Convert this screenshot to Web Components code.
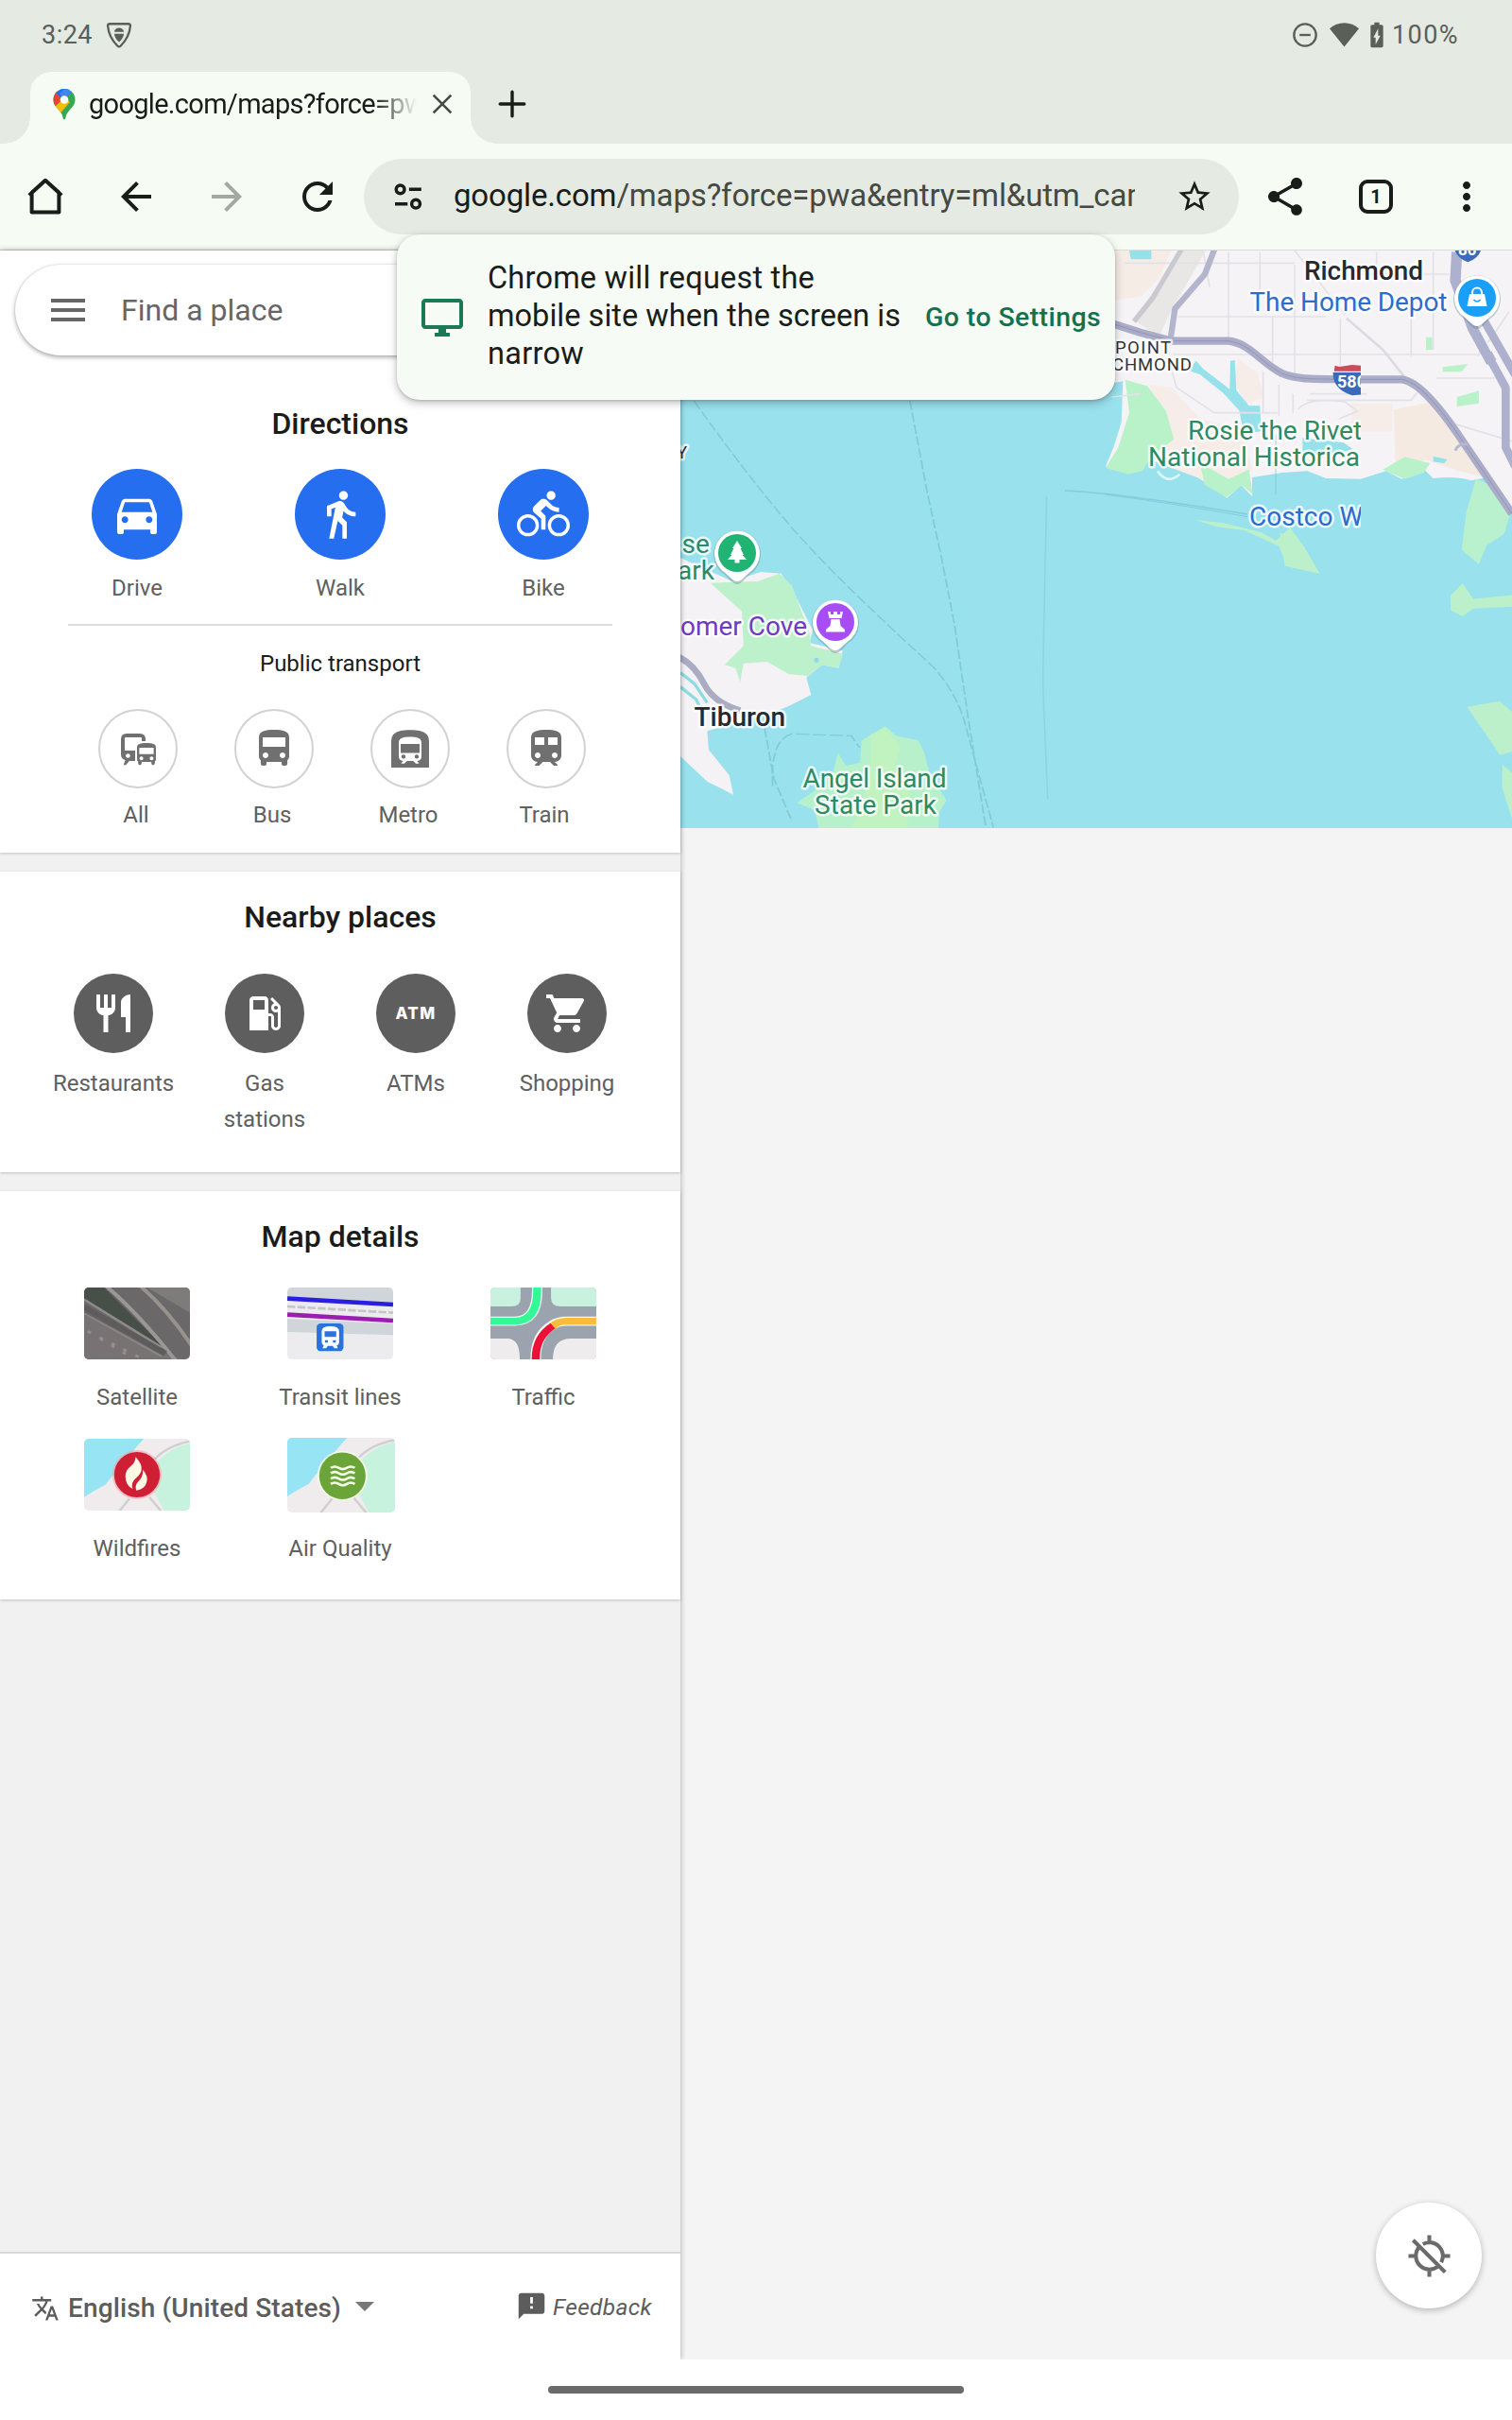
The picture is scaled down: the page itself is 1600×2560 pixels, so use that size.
<!DOCTYPE html>
<html lang="en">
<head>
<meta charset="utf-8">
<title>Google Maps</title>
<style>
html,body{margin:0;padding:0}
body{width:1600px;height:2560px;overflow:hidden;background:#fff;font-family:Roboto,"Liberation Sans",sans-serif}
</style>
</head>
<body>
<maps-screen></maps-screen>
<script>
const ICONS = {
  menu: '<path d="M3 18h18v-2H3v2zm0-5h18v-2H3v2zm0-7v2h18V6H3z"/>',
  home: '<path d="M12 3.400 4.800 9.900V20.300h14.400V9.900z M3.400 11.300 12 3.400l8.600 7.900" fill="none" stroke="currentColor" stroke-width="2" stroke-linejoin="round"/>',
  back: '<path d="M20 11H7.830l5.590-5.590L12 4l-8 8 8 8 1.410-1.410L7.830 13H20v-2z"/>',
  forward: '<path d="M12 4l-1.410 1.410L16.170 11H4v2h12.170l-5.580 5.590L12 20l8-8z"/>',
  reload: '<path d="M17.650 6.350C16.200 4.900 14.210 4 12 4c-4.420 0-7.990 3.580-7.990 8s3.570 8 7.990 8c3.730 0 6.840-2.550 7.730-6h-2.080c-.82 2.330-3.040 4-5.650 4-3.310 0-6-2.690-6-6s2.690-6 6-6c1.660 0 3.140.69 4.220 1.780L13 11h7V4l-2.350 2.350z"/>',
  tune: '<g fill="none" stroke="currentColor" stroke-width="2"><circle cx="7.200" cy="7.600" r="2.500"/><circle cx="16.600" cy="16.400" r="2.500"/><path d="M12.500 7.600h7.400M4 16.400h7.600"/></g>',
  star: '<path d="M22 9.240l-7.190-.62L12 2 9.190 8.630 2 9.240l5.460 4.730L5.820 21 12 17.270 18.180 21l-1.630-7.030L22 9.240zM12 15.400l-3.760 2.270 1-4.280-3.320-2.880 4.380-.38L12 6.100l1.710 4.040 4.380.38-3.320 2.880 1 4.280L12 15.400z"/>',
  share: '<path d="M18 16.080c-.76 0-1.440.3-1.960.77L8.910 12.700c.05-.23.09-.46.09-.7s-.04-.47-.09-.7l7.050-4.110c.54.5 1.250.81 2.040.81 1.660 0 3-1.340 3-3s-1.340-3-3-3-3 1.340-3 3c0 .24.04.47.09.7L8.040 9.810C7.500 9.310 6.790 9 6 9c-1.660 0-3 1.340-3 3s1.340 3 3 3c.79 0 1.500-.31 2.040-.81l7.120 4.160c-.05.21-.08.43-.08.65 0 1.610 1.310 2.920 2.920 2.920s2.920-1.310 2.920-2.920-1.310-2.920-2.920-2.920z"/>',
  dots: '<path d="M12 8c1.100 0 2-.9 2-2s-.9-2-2-2-2 .9-2 2 .9 2 2 2zm0 2c-1.100 0-2 .9-2 2s.9 2 2 2 2-.9 2-2-.9-2-2-2zm0 6c-1.100 0-2 .9-2 2s.9 2 2 2 2-.9 2-2-.9-2-2-2z"/>',
  close: '<path d="M4 4l16 16M20 4L4 20" fill="none" stroke="currentColor" stroke-width="2.200"/>',
  plus: '<path d="M12 3v18M3 12h18" fill="none" stroke="currentColor" stroke-width="2.400" stroke-linecap="round"/>',
  monitor: '<path d="M21 2H3c-1.100 0-2 .9-2 2v12c0 1.100.9 2 2 2h7v2H8v2h8v-2h-2v-2h7c1.100 0 2-.9 2-2V4c0-1.100-.9-2-2-2zm0 14H3V4h18v12z"/>',
  debug: '<path d="M4.200 2.600h15.600q2 0 1.700 2c-.6 6.400-3.500 12-8.100 16.600q-1.400 1.300-2.800 0C6 16.600 3.100 11 2.500 4.600q-.3-2 1.700-2z" fill="none" stroke="currentColor" stroke-width="1.900"/><path d="M8 9.300a4 3.300 0 0 1 8 0z M8 10.900h8c0 2.700-1.900 5.200-4 7-2.100-1.800-4-4.300-4-7z"/>',
  dnd: '<circle cx="12" cy="12" r="10" fill="none" stroke="currentColor" stroke-width="2"/><path d="M7 11h10v2H7z"/>',
  wifi: '<path d="M0 7.200C3.200 4.100 7.400 2.500 12 2.500s8.800 1.600 12 4.700L12 22z"/>',
  battery: '<path d="M15.700 4H14V2h-4v2H8.300C7.600 4 7 4.600 7 5.300v15.300c0 .8.6 1.400 1.300 1.400h7.300c.8 0 1.400-.6 1.400-1.300V5.300C17 4.600 16.400 4 15.700 4zM11 19.500V14H9.200l3.800-7v5.500h1.800z"/>',
  car: '<path d="M18.920 6.010C18.720 5.420 18.160 5 17.500 5h-11c-.66 0-1.210.42-1.420 1.010L3 12v8c0 .55.45 1 1 1h1c.55 0 1-.45 1-1v-1h12v1c0 .55.45 1 1 1h1c.55 0 1-.45 1-1v-8l-2.080-5.990zM6.500 16c-.83 0-1.500-.67-1.500-1.500S5.670 13 6.500 13s1.500.67 1.500 1.500S7.330 16 6.500 16zm11 0c-.83 0-1.500-.67-1.500-1.500s.67-1.500 1.500-1.500 1.500.67 1.500 1.500-.67 1.500-1.500 1.500zM5 11l1.500-4.500h11L19 11H5z"/>',
  walk: '<path d="M13.500 5.500c1.100 0 2-.9 2-2s-.9-2-2-2-2 .9-2 2 .9 2 2 2zM9.800 8.900L7 23h2.100l1.800-8 2.100 2v6h2v-7.500l-2.100-2 .6-3C14.800 12 16.800 13 19 13v-2c-1.900 0-3.500-1-4.300-2.400l-1-1.600c-.4-.6-1-1-1.700-1-.3 0-.5.1-.8.1L6 8.300V13h2V9.600l1.800-.7"/>',
  bike: '<path d="M15.500 5.500c1.100 0 2-.9 2-2s-.9-2-2-2-2 .9-2 2 .9 2 2 2zM5 12c-2.800 0-5 2.200-5 5s2.200 5 5 5 5-2.200 5-5-2.200-5-5-5zm0 8.500c-1.900 0-3.500-1.600-3.500-3.500s1.600-3.500 3.500-3.500 3.500 1.600 3.500 3.500-1.600 3.500-3.500 3.500zm5.800-10l2.400-2.400.8.8c1.300 1.300 3 2.100 5.100 2.100V9c-1.500 0-2.700-.6-3.600-1.500l-1.900-1.900c-.5-.4-1-.6-1.600-.6s-1.100.2-1.400.6L7.800 8.400c-.4.4-.6.9-.6 1.400 0 .6.2 1.100.6 1.400L11 14v5h2v-6.200l-2.200-2.300zM19 12c-2.800 0-5 2.200-5 5s2.200 5 5 5 5-2.200 5-5-2.200-5-5-5zm0 8.500c-1.900 0-3.500-1.600-3.500-3.500s1.600-3.500 3.500-3.500 3.500 1.600 3.500 3.500-1.600 3.500-3.500 3.500z"/>',
  all: '<path fill-rule="evenodd" d="M6 4h7q3 0 3 3v1h-2V6.400q0-.4-.5-.4H5.500q-.5 0-.5.5V13h5.500v5.500H7.400L5.600 20.600H4.400L5.300 18Q3 17.500 3 15V7q0-3 3-3zm.7 10.600a1.150 1.150 0 1 0 .01 0z"/><path fill-rule="evenodd" d="M16.500 9c3 0 5 .4 5 2.400v6.200q0 .8-.6 1.300v.9q0 .9-.9.9t-.9-.9V19h-5.200v.8q0 .9-.9.9t-.9-.9v-.9q-.6-.5-.6-1.300v-6.200c0-2 2-2.400 5-2.400zM12.700 11.500v3.400h7.600v-3.400zM13.800 16.100a1 1 0 1 0 .01 0zm5.400 0a1 1 0 1 0 .01 0z"/>',
  bus: '<path d="M4 16c0 .88.390 1.670 1 2.220V20c0 .55.45 1 1 1h1c.55 0 1-.45 1-1v-1h8v1c0 .55.45 1 1 1h1c.55 0 1-.45 1-1v-1.780c.61-.55 1-1.340 1-2.220V6c0-3.500-3.580-4-8-4s-8 .5-8 4v10zm3.500 1c-.83 0-1.500-.67-1.500-1.500S6.670 14 7.500 14s1.500.67 1.500 1.500S8.330 17 7.500 17zm9 0c-.83 0-1.500-.67-1.500-1.500s.67-1.500 1.500-1.500 1.500.67 1.500 1.500-.67 1.500-1.500 1.500zm1.500-6H6V6h12v5z"/>',
  metro: '<path fill-rule="evenodd" d="M7 2.500C9 2 15 2 17 2.500q5 1 5 5.500v14H2V8q0-4.500 5-5.500zM12 5.800c-3.500 0-6 .5-6 3.200v7q0 2.300 2.300 2.500L7.200 19.900h1.700L10.400 18.500h3.200l1.500 1.400h1.700l-1.100-1.400Q18 18.300 18 16V9c0-2.700-2.500-3.200-6-3.200zM7 9.500h10v4.800H7zM8.500 15.100a1.100 1.100 0 1 1-.01 0zm7 0a1.100 1.100 0 1 1-.01 0z"/>',
  train: '<path d="M12 2c-4 0-8 .5-8 4v9.500C4 17.430 5.570 19 7.500 19L6 20.500v.5h2.230l2-2H14l2 2h2v-.5L16.500 19c1.930 0 3.500-1.570 3.500-3.500V6c0-3.500-3.580-4-8-4zM7.500 17c-.83 0-1.500-.67-1.500-1.500S6.670 14 7.500 14s1.500.67 1.500 1.500S8.330 17 7.500 17zm3.500-7H6V6h5v4zm2 0V6h5v4h-5zm3.500 7c-.83 0-1.500-.67-1.500-1.500s.67-1.500 1.500-1.500 1.500.67 1.500 1.500-.67 1.500-1.500 1.500z"/>',
  food: '<path d="M11 9H9V2H7v7H5V2H3v7c0 2.120 1.660 3.840 3.750 3.970V22h2.500v-9.030C11.340 12.840 13 11.120 13 9V2h-2v7zm5-3v8h2.500v8H21V2c-2.760 0-5 2.240-5 4z"/>',
  gas: '<path d="M19.770 7.230l.01-.01-3.720-3.720L15 4.560l2.110 2.110c-.94.36-1.610 1.260-1.610 2.330 0 1.380 1.120 2.500 2.500 2.500.36 0 .69-.08 1-.21v7.210c0 .55-.45 1-1 1s-1-.45-1-1V14c0-1.100-.9-2-2-2h-1V5c0-1.100-.9-2-2-2H6c-1.100 0-2 .9-2 2v16h10v-7.500h1.500v5c0 1.380 1.120 2.500 2.500 2.500s2.500-1.120 2.500-2.500V9c0-.69-.28-1.320-.73-1.770zM12 10H6V5h6v5zm6 0c-.55 0-1-.45-1-1s.45-1 1-1 1 .45 1 1-.45 1-1 1z"/>',
  cart: '<path d="M7 18c-1.100 0-1.990.9-1.990 2S5.900 22 7 22s2-.9 2-2-.9-2-2-2zM1 2v2h2l3.600 7.590-1.350 2.450c-.16.28-.25.61-.25.96 0 1.100.9 2 2 2h12v-2H7.420c-.14 0-.25-.11-.25-.25l.03-.12.9-1.630h7.450c.75 0 1.410-.41 1.750-1.030l3.580-6.490c.08-.14.12-.31.12-.48 0-.55-.45-1-1-1H5.210l-.94-2H1zm16 16c-1.100 0-1.990.9-1.990 2s.89 2 1.990 2 2-.9 2-2-.9-2-2-2z"/>',
  translate: '<path d="M12.870 15.070l-2.540-2.510.03-.03c1.740-1.940 2.980-4.170 3.710-6.530H17V4h-7V2H8v2H1v1.990h11.170C11.500 7.920 10.440 9.750 9 11.350 8.070 10.320 7.300 9.190 6.690 8h-2c.73 1.630 1.730 3.170 2.980 4.560l-5.090 5.020L4 19l5-5 3.110 3.110.76-2.040zM18.500 10h-2L12 22h2l1.120-3h4.750L21 22h2l-4.500-12zm-2.620 7l1.620-4.330L19.120 17h-3.240z"/>',
  feedback: '<path d="M20 2H4c-1.100 0-1.990.9-1.990 2L2 22l4-4h14c1.100 0 2-.9 2-2V4c0-1.100-.9-2-2-2zm-7 12h-2v-2h2v2zm0-4h-2V5h2v5z"/>',
  nolocation: '<g fill="none" stroke="currentColor" stroke-width="2"><path d="M8.700 5.840A7 7 0 0 1 18.200 15.300M17 16.900A7 7 0 0 1 7.100 7M12 1.200V5M12 19v3.800M1.200 12H5M19 12h3.800M3.600 3.800 20.200 20.400"/></g>'
};

function define(name, css, html, setup) {
  const t = document.createElement('template');
  customElements.define(name, class extends HTMLElement {
    constructor() { super(); this.attachShadow({mode: 'open'}); }
    connectedCallback() {
      t.innerHTML = '<style>*{box-sizing:border-box}' + css + '</style>' + (typeof html === 'function' ? html(this) : html);
      this.shadowRoot.replaceChildren(t.content.cloneNode(true));
      if (setup) setup(this);
    }
  });
}

define('g-icon', ':host{display:block;flex:none}svg{display:block;fill:currentColor}',
  el => `<svg width="${el.getAttribute('size')}" height="${el.getAttribute('size')}" viewBox="0 0 24 24">${ICONS[el.getAttribute('name')]}</svg>`);

/* One line of text whose tracking is adjusted so that it spans the given width. */
define('fit-text', ':host{display:block;white-space:nowrap;flex:none}span{display:inline-block}', '<span><slot></slot></span>', el => {
  const s = el.shadowRoot.querySelector('span'), w = +el.getAttribute('w');
  s.style.letterSpacing = ((w - s.getBoundingClientRect().width) / el.textContent.length) + 'px';
});

define('status-bar',
  `:host{display:flex;height:76px;align-items:center;padding:0 56px 3px 44px;color:#5a5f59;font-size:27px;background:#e5eae3}
   .r{margin-left:auto;display:flex;align-items:center} `,
  `<fit-text w="54">3:24</fit-text><g-icon name="debug" size="30" style="margin-left:13px"></g-icon>
   <div class="r"><g-icon name="dnd" size="28" style="margin-right:12px"></g-icon><g-icon name="wifi" size="31" style="margin-right:3px"></g-icon><g-icon name="battery" size="32"></g-icon><fit-text w="71">100%</fit-text></div>`);

define('tab-strip',
  `:host{display:flex;height:76px;background:#e5eae3;color:#191d19}
   .tab{position:relative;display:flex;align-items:center;margin-left:32px;width:466px;height:76px;padding:0 16px 8px 24px;background:#f6fcf4;border-radius:22px 22px 0 0}
   .tab:before,.tab:after{content:"";position:absolute;bottom:0;width:28px;height:28px}
   .tab:before{left:-28px;background:radial-gradient(circle at 0 0,#0000 27.500px,#f6fcf4 28px)}
   .tab:after{right:-28px;background:radial-gradient(circle at 100% 0,#0000 27.500px,#f6fcf4 28px)}
   .pin{flex:none;margin-right:14px}
   .t{width:347px;flex:none;overflow:hidden;font-size:29px;line-height:40px;-webkit-mask:linear-gradient(90deg,#000 87%,#0000 100%);mask:linear-gradient(90deg,#000 87%,#0000 100%)}
   .x{color:#454944;margin-left:13px}`,
  `<div class="tab"><svg class="pin" width="24" height="33" viewBox="0 0 24 33"><defs><clipPath id="p"><path d="M12 0a11.500 11.500 0 0 1 11.500 11.500c0 7-5.500 9-9 15.500-1 2-1 5.500-2.500 5.500s-1.500-3.500-2.500-5.500c-3.500-6.500-9-8.500-9-15.500A11.500 11.500 0 0 1 12 0z"/></clipPath></defs><g clip-path="url(#p)"><path fill="#34a853" d="M0 0h24v33H0z"/><path fill="#fbbc04" d="M-2 24 12 8l6 6L5 29z"/><path fill="#ea4335" d="M0 20V2l4-1 8 9z"/><path fill="#1a73e8" d="M3 4l5 5 4 2L22 1 12-2z"/><path fill="#4285f4" d="M12 12 22 0l-8-2-7 7z"/></g><circle cx="12" cy="11.500" r="4.300" fill="#fff"/></svg>
   <div class="t"><fit-text w="370">google.com/maps?force=pwa</fit-text></div><g-icon class="x" name="close" size="28"></g-icon></div><g-icon name="plus" size="34" style="margin:17px 0 0 27px"></g-icon>`);

define('tool-bar',
  `:host{display:flex;height:112px;align-items:center;background:#f6fcf4;color:#191d19;padding-left:24px}
   .pill{display:flex;align-items:center;width:926px;height:80px;border-radius:40px;background:#e5eae3;margin-left:25px;padding-left:26px}
   .u{width:721px;overflow:hidden;font-size:33px;line-height:44px;color:#454944;margin:0 0 2px 27px}
   b{font-weight:400;color:#191d19}
   .n{width:36px;height:36px;border:4px solid #191d19;border-radius:9px;font-size:20px;font-weight:700;line-height:28px;text-align:center}`,
  `<g-icon name="home" size="48"></g-icon><g-icon name="back" size="48" style="margin-left:48px"></g-icon><g-icon name="forward" size="48" style="margin-left:48px;color:#a3a8a1"></g-icon><g-icon name="reload" size="48" style="margin-left:48px"></g-icon>
   <div class="pill"><g-icon name="tune" size="42"></g-icon><div class="u"><fit-text w="741"><b>google.com</b>/maps?force=pwa&amp;entry=ml&amp;utm_cam</fit-text></div><g-icon name="star" size="40" style="margin-left:43px"></g-icon></div>
   <g-icon name="share" size="48" style="margin-left:25px"></g-icon><div class="n" style="margin-left:54px">1</div><g-icon name="dots" size="48" style="margin-left:54px"></g-icon>`);

define('snack-bar',
  `:host{position:absolute;left:420px;top:248px;width:760px;height:175px;border-radius:24px;background:#f6fbf5;box-shadow:0 3px 10px #0004,0 1px 3px #0002;display:flex;align-items:center;z-index:5;color:#191d19;font-size:32.500px}
   .m{line-height:40px;margin:0 0 3px 24px;width:463px}
   .a{color:#15714d;font-weight:500;font-size:28.500px}`,
  `<g-icon name="monitor" size="48" style="color:#1b7a55;margin-left:24px"></g-icon><div class="m"><fit-text w="346">Chrome will request the</fit-text><fit-text w="437">mobile site when the screen is</fit-text><fit-text w="102">narrow</fit-text></div><fit-text class="a" w="186">Go to Settings</fit-text>`);

define('search-box',
  `:host{display:flex;align-items:center;height:96px;margin:15px 16px 0;padding:0 32px;border-radius:48px;background:#fff;box-shadow:0 2px 5px #0005,0 0 2px #0002;color:#666;font-size:32px}`,
  `<g-icon name="menu" size="48"></g-icon><span style="margin-left:32px"><slot></slot></span>`);

define('round-item',
  `:host{display:flex;flex-direction:column;align-items:center;flex:none;width:var(--col);font-size:24px;line-height:38px;color:#606060;text-align:center}
   .c{width:var(--d);height:var(--d);border-radius:50%;background:var(--bg);border:var(--bd,0);color:var(--fg);display:flex;align-items:center;justify-content:center;margin-bottom:var(--gap);position:relative;left:var(--shift,0)}
   .atm{font:800 17px Inter,Roboto,sans-serif}`,
  el => `<div class="c">${el.getAttribute('icon') === 'atm' ? '<fit-text class="atm" w="43">ATM</fit-text>' : `<g-icon name="${el.getAttribute('icon')}" size="${el.getAttribute('size') || 48}"></g-icon>`}</div><span><slot></slot></span>`);

define('panel-card',
  `:host{display:block;background:#fff;box-shadow:0 1px 3px #0003;flex:none}
   h2{margin:0;font-size:32px;font-weight:500;line-height:40px;text-align:center;color:#1b1b1b}`,
  el => `<slot name="top"></slot><h2>${el.getAttribute('heading')}</h2><slot></slot>`);

const coast = (x, y, extra) => `<path fill="#f0ecee" d="M${x} ${y}h300v240h-300z"/><path fill="#96e4f4" d="M${x} ${y}h165q-25 30-55 75Q${x+75} ${y+120} ${x+60} ${y+145} ${x+20} ${y+170} ${x} ${y+185}z"/><path fill="#c6f2de" d="M${x+300} ${y+12}Q${x+240} ${y+25} ${x+205} ${y+70} L${x+195} ${y+175} ${x+228} ${y+240} H${x+300}z" /><path fill="none" stroke="#cfcfd0" stroke-width="7" d="M${x+300} ${y+6}Q${x+230} ${y+20} ${x+195} ${y+65}M${x+180} ${y+185}L${x+220} ${y+240}M${x+125} ${y+190}L${x+90} ${y+240}"/>${extra}`;
const THUMBS = {
  satellite: ['76 66 292 228', '<path fill="#6b6869" d="M76 66h292v228H76z"/><path fill="#465049" d="M76 66h55l165 190L76 100z"/><path fill="#777374" d="M76 150 290 270l60 24H76z"/><path fill="#7d7c7b" d="M250 66h118v80z"/><path fill="none" stroke="#8f8b8a" stroke-width="7" d="M76 104 292 258"/><path fill="none" stroke="#9b9795" stroke-width="11" d="M135 60Q220 140 330 300"/><path fill="none" stroke="#98928e" stroke-width="11" d="M232 62Q310 140 375 255"/><path fill="none" stroke="#5e5b5d" stroke-width="18" d="M76 128 300 275"/><path fill="none" stroke="#8b8684" stroke-width="5" d="M76 148 290 285"/><path fill="none" stroke="#998f87" stroke-width="8" stroke-dasharray="10 28" d="M86 205 250 300M120 228 210 290"/>'],
  transit: ['638 66 292 228', '<path fill="#ececee" d="M638 66h292v228H638z"/><path fill="#d0d5d9" d="M638 66h292v60L638 96zM638 165l292 16v36l-292-10z"/><path fill="none" stroke="#c3c5c8" stroke-width="8" stroke-dasharray="22 6" d="M638 126 930 146"/><path fill="none" stroke="#2a1fe0" stroke-width="14" d="M638 101 930 120"/><path fill="none" stroke="#9a1fae" stroke-width="14" d="M638 152 930 171"/><rect x="719" y="180" width="74" height="88" rx="12" fill="#2b72dd"/><path fill="#fff" fill-rule="evenodd" d="M733 205q0-16 24-16t24 16v34q0 9-7 11l4 9h-10l-5-8h-13l-5 8h-10l4-9q-6-2-6-11zM741 205v18h32v-18zM742 233v8h8v-8zm22 0v8h8v-8z"/>'],
  traffic: ['1200 66 292 228', '<path fill="#9aa3ae" d="M1200 66h292v228h-292z"/><path fill="#c9f1df" d="M1200 66h83v35q0 25-25 25h-58zM1367 66h125v60h-98q-27 0-27-27z"/><path fill="#eeeced" d="M1200 228h47q34 0 34 66h-81zM1492 228h-70q-50 0-50 66h120z"/><g fill="none" stroke="#eefaf2" stroke-width="29"><path d="M1329 60v16q0 97-62 97h-70M1325 300Q1322 220 1370 186 1385 173 1410 173h85"/></g><path fill="none" stroke="#32f995" stroke-width="22" d="M1329 60v16q0 97-62 97h-70"/><path fill="none" stroke="#fbbc38" stroke-width="22" d="M1370 190q15-17 40-17h85"/><path fill="none" stroke="#ee1038" stroke-width="22" d="M1325 300Q1322 225 1372 188"/>'],
  fire: ['76 546 292 228', coast(76, 546, '<ellipse cx="222" cy="660" rx="68" ry="78" fill="#f3a3a8" opacity=".6"/><ellipse cx="222" cy="660" rx="63" ry="72" fill="#cf1f35"/><path fill="#fff9e6" d="M218 604q20 24 16 43-3 12-16 25-14 14-8 33-20-12-20-40 0-18 14-31 14-13 14-30zM238 644q17 22 10 42-5 19-28 24-5-14 5-28 14-14 13-38z"/>')],
  air: ['638 543 297 236', coast(638, 543, '<ellipse cx="790" cy="663" rx="69" ry="79" fill="#f1fbe8"/><ellipse cx="790" cy="663" rx="64" ry="74" fill="#6ba539"/><g fill="none" stroke="#f3ffe6" stroke-width="7.500">' + [638, 655, 672, 689].map(y => `<path d="M758 ${y}q11-8 22 0t22 0 22 0"/>`).join('') + '</g>')]
};
define('detail-item',
  `:host{display:flex;flex-direction:column;align-items:center;width:215px;font-size:24px;line-height:38px;color:#606060}
   svg{display:block;border-radius:5px;width:112px;height:76px;margin-bottom:21px}
   :host([art=air]) svg{width:114px;height:79px;margin:-1px -1px 19px 1px}`,
  el => { const [vb, art] = THUMBS[el.getAttribute('art')]; return `<svg viewBox="${vb}" preserveAspectRatio="none">${art}</svg><slot></slot>`; });

define('side-panel',
  `:host{display:flex;flex-direction:column;width:720px;flex:none;background:#f1f1f1;position:relative;z-index:2;box-shadow:0 0 6px #0005}
   .row{display:flex}
   .modes{padding:28px 0 0 37.500px;--col:215px;--d:96px;--bg:#256ef0;--fg:#fff;--gap:11px}
   hr{margin:19px 72px 21px;border:0;height:2px;background:#dcdcdc}
   .sub{font-size:24px;line-height:38px;text-align:center;color:#1b1b1b}
   .pt{padding:29px 0 0 72px;--col:144px;--d:84px;--bg:#fff;--bd:2px solid #d2d2d2;--fg:#707070;--gap:9px;--shift:2px}
   .near{padding:40px 0 0 40px;--col:160px;--d:84px;--bg:#5e5e5e;--fg:#fff;--gap:13px}
   .det{display:grid;grid-template-columns:repeat(3,215px);row-gap:25px;padding:34px 0 0 37.500px}
   footer{margin-top:auto;height:114px;border-top:2px solid #d9d9d9;background:#fff;display:flex;align-items:flex-start;padding:37px 30px 0 33px;color:#5c5c5c;line-height:40px}
   .lang{font-size:28px;font-weight:500;margin:1px 0 0 9px}
   .tri{border:10px solid #0000;border-top-color:#777;border-bottom:0;margin:14px 0 0 15px}
   .fb{font-size:24.500px;font-style:italic;margin-left:6px}`,
  `<panel-card heading="Directions" style="height:637px"><div slot="top" style="padding-bottom:52px"><search-box>Find a place</search-box></div>
     <div class="row modes"><round-item icon="car" size="56">Drive</round-item><round-item icon="walk" size="56">Walk</round-item><round-item icon="bike" size="56">Bike</round-item></div>
     <hr><div class="sub">Public transport</div>
     <div class="row pt"><round-item icon="all">All</round-item><round-item icon="bus">Bus</round-item><round-item icon="metro">Metro</round-item><round-item icon="train">Train</round-item></div>
   </panel-card>
   <panel-card heading="Nearby places" style="height:318px;margin-top:20px;padding-top:28px;box-sizing:border-box"><div class="row near"><round-item icon="food">Restaurants</round-item><round-item icon="gas">Gas<br>stations</round-item><round-item icon="atm">ATMs</round-item><round-item icon="cart">Shopping</round-item></div></panel-card>
   <panel-card heading="Map details" style="height:432px;margin-top:20px;padding-top:28px;box-sizing:border-box"><div class="det"><detail-item art="satellite">Satellite</detail-item><detail-item art="transit">Transit lines</detail-item><detail-item art="traffic">Traffic</detail-item><detail-item art="fire">Wildfires</detail-item><detail-item art="air">Air Quality</detail-item></div></panel-card>
   <footer><g-icon name="translate" size="30" style="margin-top:6px"></g-icon><fit-text class="lang" w="289">English (United States)</fit-text><i class="tri"></i><g-icon name="feedback" size="33" style="margin:2px 0 0 auto"></g-icon><fit-text class="fb" w="105">Feedback</fit-text></footer>`);

const pin = (x, y, color, glyph) => `<g transform="translate(${x} ${y})"><path d="M0 33C-5 33-8 27-14 22A25 25 0 1 1 14 22C8 27 5 33 0 33z" fill="#5a7a80" opacity=".35"/><path d="M0 30C-4 30-8 25-14 20A24 24 0 1 1 14 20C8 25 4 30 0 30z" fill="#fff"/><circle r="20" fill="${color}"/>${glyph}</g>`;
define('map-view',
  `:host{display:flex;flex-direction:column;flex:1;background:#f4f4f4;position:relative}
   svg.m{display:block;width:880px;height:611px}
   text{font-family:Roboto,sans-serif;font-size:28px;paint-order:stroke;stroke:#fffc;stroke-width:5px;stroke-linejoin:round}
   .g{fill:#2e8a63}.b{fill:#2f6bcb}.k{fill:#27292c;font-weight:500}.s{font-size:18.500px;fill:#333}
   .road{fill:none;stroke-linejoin:round}.thin{fill:none;stroke:#e3e1e8;stroke-width:5}.ferry{fill:none;stroke:#80cbd9;stroke-width:3;stroke-dasharray:24 7}
   .loc{position:absolute;right:32px;bottom:54px;width:112px;height:112px;border-radius:50%;background:#fff;color:#6b6b6b;display:flex;align-items:center;justify-content:center;box-shadow:0 2px 7px #0004}`,
  `<svg class="m" viewBox="720 265 880 611"><defs><clipPath id="tile"><path d="M720 265h720v611H720z"/></clipPath><clipPath id="half"><path d="M700 370h110v120H700z"/></clipPath></defs>
   <path fill="#98e1ed" d="M720 265h880v611H720z"/>
   <g transform="translate(1170 260) scale(.33333)">
     <path fill="#f5f3f6" d="M0 0H1290V830L1215 735 1160 745Q1110 730 1040 738L1000 700 940 740 890 715 810 740 700 738 640 715 560 720 465 735V795L430 760 385 800 300 740 240 700 130 680 75 720 0 700 25 640 50 560 55 430 0 440z"/>
     <path fill="#f5ece5" d="M30 12h180l-40 90-60 60-80 10z"/><path fill="#e9e7e6" d="M240 12h80l-110 190-40 85-80-50z"/>
     <path fill="#f5eae1" d="M915 520l125-25 90 110 75 130-85-20-100-35-100 10z"/><path fill="#f6ede8" d="M140 440l70 10 90 100 130 30 35 130-80 60-190-70-60-110zM420 360l60 40 25 80-60 20-40-70zM780 500h130v90H780z"/>
     <path fill="#b9f2c8" d="M62 425l70 20 60 80 25 90-70 50-30 50-45 10-72-20 40-65 35-110zM300 690l90 50 65-30 12 80-35-30-48 38-70-40zM880 710l70-40 80 20-20 30-60 20zM1115 480l70-20v40l-70 10zM1070 385l80-10-20 25h-60zM1017 290l20 0v40h-20z"/>
     <path fill="#96e1ea" d="M262 395l25-30 22 25 85 65 2-90 14-2 5 95 40 50 35 0 4 80-55 10-15-75-50-55-75-60zM625 610l130 15 30 20-60 20-100 0zM75 15h70v28H80zM1040 668l45 10-10 12-35-5z"/>
     <path fill="none" stroke="#ddf8f6" stroke-width="8" d="M165 715q30 45 70 10"/>
     <path fill="#b9f0cd" d="M1175 740l50 20 60 90-20 65-55 35-25 60-55-45 15-120z"/>
     <path class="thin" d="M60 55H600M230 225H700M390 20V300M490 20V170M600 60V430M745 230V400M530 225V370M215 345H1180M860 20V100M1040 20V330M970 180V350M700 90H1090M600 15L760 220M20 480L110 470M205 380l20 70 120 80h200M500 400v130M550 440v100M595 470v60M610 520q30-40 150-25l40 30-60 25M640 490h330l20-25M650 470h180M1180 350l60-80 40-60M1050 420h190l30 60M1090 560l200 60M310 20L330 130"/>
     <path fill="none" stroke="#dcdbe2" stroke-width="8" d="M765 230L880 330 960 430"/>
     <path class="road" stroke="#cac9d0" stroke-width="16" d="M240 12L150 165 90 240"/>
     <path class="road" stroke="#b3b5cc" stroke-width="19" d="M345 12L315 90 220 200 207 290"/>
     <path class="road" stroke="#aaacc8" stroke-width="25" d="M20 247L110 275 210 302H390C460 310 490 370 560 405 610 425 650 422 780 424H940C1000 430 1080 540 1140 630L1290 850"/>
     <path class="road" stroke="#9295b8" stroke-width="3" d="M20 247L110 275 210 302H390C460 310 490 370 560 405 610 425 650 422 780 424H940C1000 430 1080 540 1140 630L1290 850"/>
     <path class="road" stroke="#aeb1ce" stroke-width="34" d="M1115 20L1110 110 1165 260 1225 370"/>
     <path class="road" stroke="#aeb1ce" stroke-width="26" d="M1215 350L1270 450V640L1300 700M1200 235L1300 410"/><path fill="none" stroke="#f3f3fa" stroke-width="5" d="M1185 260L1225 335M1240 350L1285 440"/>
     <path class="road" stroke="#b7b9cf" stroke-width="9" d="M1110 650q10-25 40-20"/>
     <path fill="#bcf0cb" d="M285 870l90 10 120 30 45 25 45-40 45 60 40 68-95-10-25-60-110-50-90-12z"/>
     <path fill="none" stroke="#7dc3d4" stroke-width="3" opacity=".7" d="M0 790q200 25 450 70M540 600V790"/>
     <path fill="#3c6cb9" d="M1108 12h84q-8 28-42 40-34-12-42-40z"/>
     <g clip-path="url(#half)"><path fill="#3b6bb8" d="M722 402h90v70l-30 3q-62-20-60-73z"/><path fill="#cc4b5b" d="M728 380l14 4 40-6 28 2v18h-85z"/></g>
   </g>
   <g transform="translate(700 260) scale(.57398 .40816)">
     <path fill="#bcf0cb" d="M1140 745l32 10 42 95-65-20zM1455 905l22-30 20 40 71-10v30l-71 5-20 20-22-15zM1485 1195l60-15 25 30v100l-24 10zM1550 1345l18 20v120l-18-80z"/>
     <g class="ferry"><path d="M60 402Q160 600 240 730T500 1090Q545 1160 560 1240T612 1508" /><path d="M458 402L490 640 515 800 540 980 565 1220 598 1508"/><path d="M190 1250L207 1380 240 1490" /><path d="M205 1400Q200 1280 240 1265L350 1270 365 1300"/></g>
     <path fill="none" stroke="#86cfdd" stroke-width="2.500" opacity=".7" d="M712 1435L703 1130 710 650"/>
   </g>
   <path fill="none" stroke="#84cddb" stroke-width="1.300" d="M1127 519Q1180 521 1320 544"/>
   <g transform="translate(715 560) scale(.33333)">
     <path fill="#f4f2f4" d="M15 90L180 165 270 135 335 140 380 210 435 320 425 360 530 385 518 440 465 430 415 470 430 525 360 560 300 585 100 640 105 700 170 780 183 842 100 800 15 720z"/>
     <path fill="#bdf1cc" d="M110 170L260 165 330 140 370 180 425 330 430 370 530 395 518 440 465 430 420 465 360 460 290 420 215 425 205 485 190 440 155 430 215 370 210 260z"/>
     <path fill="none" stroke="#8edce3" stroke-width="10" d="M15 455l45 35 40 60M15 500l50 40 20 40"/>
     <path class="road" stroke="#aaacc4" stroke-width="20" d="M10 405Q60 430 90 490T205 575"/>
     <path fill="#b7f1cb" d="M455 948L440 890 385 868 440 830 500 770 515 708 540 750 585 740 590 670 640 640 665 625 700 655 770 670 790 710 805 770 860 860 835 900V948z"/>
     <path fill="#c0f3c0" d="M620 650l45-20 50 60-20 60 50 60-10 138H560l60-160z"/>
     <circle cx="447" cy="415" r="8" fill="#8edce3"/>
   </g>
   <text class="k" x="1380" y="296" textLength="126">Richmond</text>
   <text class="b" x="1322.500" y="328.700" textLength="209">The Home Depot</text>
   <text class="s" x="1180" y="373.500" textLength="59">POINT</text><text class="s" x="1177" y="391.700" textLength="84">CHMOND</text>
   <text class="s" x="716" y="485">Y</text>
   <g clip-path="url(#tile)"><text class="g" x="1257" y="464.500">Rosie the Riveter</text><text class="g" x="1215" y="492.500" textLength="224">National Historica</text><text class="b" x="1322" y="555.500">Costco Wh</text>
   <text x="1415" y="410" style="font-size:18px;font-weight:700;fill:#fff;stroke:none">580</text></g>
   <text x="1543" y="270" style="font-size:17px;font-weight:700;fill:#fff;stroke:none">80</text>
   <text class="g" x="721.500" y="584.500">se</text><text class="g" x="717" y="612.500">ark</text>
   <text x="720" y="671.500" style="fill:#7239c4" textLength="134">omer Cove</text><text class="k" x="734.500" y="768">Tiburon</text>
   <text class="g" x="849.500" y="832.700" textLength="152">Angel Island</text><text class="g" x="862" y="860.700" textLength="129">State Park</text>
   ${pin(1563, 315, '#1a9ff9', '<path fill="#fff" d="M-8-4H8L10.500 9h-21z"/><path d="M-5-3v-2.500a5 5 0 0 1 10 0V-3" fill="none" stroke="#fff" stroke-width="2"/><path d="M-3.500 2q3.500 4 7 0" fill="none" stroke="#1a9ff9" stroke-width="1.700"/>')}
   ${pin(780, 585, '#20b373', '<path fill="#fff" d="M0-13l5 8H3.500L7 2H5.500L10 7H2.500v3.500h-5V7H-10l4.500-5H-7l3.500-7H-5z"/>')}
   ${pin(884, 658, '#a84df5', '<path fill="#fff" d="M-8-11h3v3h3v-3h4v3h3v-3h3l-1.500 7h-13zM-4.500-3h9l1 7 4.500 4v2.500h-20V8l4.500-4z"/>')}
   </svg>
   <div class="loc"><g-icon name="nolocation" size="49"></g-icon></div>`);

define('maps-screen',
  `:host{display:flex;flex-direction:column;width:1600px;height:2560px;position:relative;overflow:hidden;background:#fff}
   main{display:flex;height:2232px;border-top:1px solid #d8dcd7}
   .nav{height:64px;background:#fff;display:flex;justify-content:center;padding-top:28px;position:relative;z-index:3}
   .nav i{width:440px;height:8px;border-radius:4px;background:#6a6a6a}`,
  `<status-bar></status-bar><tab-strip></tab-strip><tool-bar></tool-bar><main><side-panel></side-panel><map-view></map-view></main><div class="nav"><i></i></div><snack-bar></snack-bar>`);
</script>
</body>
</html>
